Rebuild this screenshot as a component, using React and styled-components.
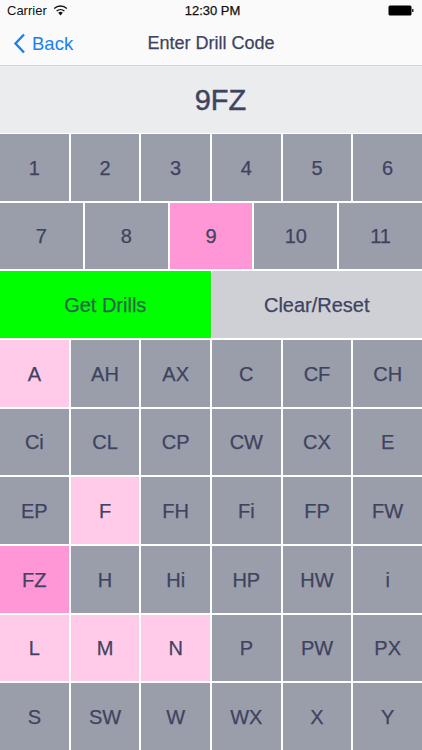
import React from 'react';
import styled, { createGlobalStyle } from 'styled-components';

const Global = createGlobalStyle`
  html, body { margin: 0; padding: 0; background: #fff; overflow: hidden; }
  body { font-family: "Liberation Sans", Arial, sans-serif; }
`;
const Screen = styled.div`
  width: 422px; height: 750px; overflow: hidden; background: #fff; color: #3f4360;
`;
const StatusBar = styled.div`
  height: 20px; background: #fafafa; padding: 0 7px; box-sizing: border-box;
  display: grid; grid-template-columns: 1fr auto 1fr; align-items: center;
  font-size: 13px; color: #111;
`;
const StatusLeft = styled.div`display: flex; align-items: center; gap: 6px;`;
const StatusRight = styled.div`display: flex; justify-content: flex-end; align-items: center; padding-right: 1px;`;
const Clock = styled.div`-webkit-text-stroke: 0.25px #111; padding-left: 3px;`;
const NavBar = styled.div`
  height: 45px; background: #fafafa; border-bottom: 1px solid #d4d5d8; box-sizing: content-box;
  display: grid; grid-template-columns: 1fr auto 1fr; align-items: center; padding-top: 0;
`;
const BackLink = styled.div`
  display: flex; align-items: center; gap: 6px; color: #1a80ef; font-size: 18.5px; padding: 2px 0 0 13px;
`;
const Title = styled.div`font-size: 18px; -webkit-text-stroke: 0.25px #3f4360; padding-top: 2px;`;
const Display = styled.div`
  height: 66.5px; background: #ebecee; display: flex; align-items: center; justify-content: center;
  padding: 2px 0 0 19px; box-sizing: border-box;
  font-size: 29px; -webkit-text-stroke: 0.45px #3f4360;
`;
const Pad = styled.div`
  display: flex; flex-direction: column; gap: 2px; padding-top: 1.5px;
`;
const Row = styled.div`
  display: grid; grid-template-columns: repeat(${p => p.$cols}, 1fr); gap: 2px; height: 66.67px; flex: none;
`;
const ActionRow = styled(Row)`gap: 1px;`;
const tones = { base: '#9a9eab', on: '#ff96d6', soft: '#ffcbe9', go: '#00ff00', clear: '#cfd0d5' };
const Key = styled.div`
  background: ${p => tones[p.$tone || 'base']};
  display: flex; align-items: center; justify-content: center;
  padding-top: 2px; box-sizing: border-box;
  font-size: 20px;
  color: ${p => (p.$tone === 'go' ? '#26684a' : '#3f4360')};
  -webkit-text-stroke: 0.25px currentColor;
`;

const rows = [
  ['A','AH','AX','C','CF','CH'],
  ['Ci','CL','CP','CW','CX','E'],
  ['EP','F','FH','Fi','FP','FW'],
  ['FZ','H','Hi','HP','HW','i'],
  ['L','M','N','P','PW','PX'],
  ['S','SW','W','WX','X','Y'],
];
const toneOf = { A: 'soft', F: 'soft', L: 'soft', M: 'soft', N: 'soft', FZ: 'on' };

export default function App() {
  return (
    <Screen>
      <Global />
      <StatusBar>
        <StatusLeft>
          <span>Carrier</span>
          <svg width="15" height="11" viewBox="0 0 15 11">
            <path d="M7.5 10.5 L5.2 7.8 A3.4 3.4 0 0 1 9.8 7.8 Z" fill="#111" />
            <path d="M3.6 6.1 A5.8 5.8 0 0 1 11.4 6.1" fill="none" stroke="#111" strokeWidth="1.4" />
            <path d="M1.2 3.5 A9.2 9.2 0 0 1 13.8 3.5" fill="none" stroke="#111" strokeWidth="1.4" />
          </svg>
        </StatusLeft>
        <Clock>12:30 PM</Clock>
        <StatusRight>
          <svg width="26" height="11" viewBox="0 0 26 11">
            <rect x="0.5" y="0.5" width="23" height="10" rx="1.5" fill="#000" />
            <rect x="24" y="4" width="1.5" height="3" fill="#333" />
          </svg>
        </StatusRight>
      </StatusBar>
      <NavBar>
        <BackLink>
          <svg width="13" height="21" viewBox="0 0 13 21">
            <path d="M11 1.5 L2.5 10.5 L11 19.5" fill="none" stroke="#1a80ef" strokeWidth="2.4" />
          </svg>
          <span>Back</span>
        </BackLink>
        <Title>Enter Drill Code</Title>
        <span />
      </NavBar>
      <Display>9FZ</Display>
      <Pad>
        <Row $cols={6}>
          {['1','2','3','4','5','6'].map(k => <Key key={k}>{k}</Key>)}
        </Row>
        <Row $cols={5}>
          {['7','8','9','10','11'].map(k => <Key key={k} $tone={k === '9' ? 'on' : 'base'}>{k}</Key>)}
        </Row>
        <ActionRow $cols={2}>
          <Key $tone="go">Get Drills</Key>
          <Key $tone="clear">Clear/Reset</Key>
        </ActionRow>
        {rows.map(r => (
          <Row $cols={6} key={r[0]}>
            {r.map(k => <Key key={k} $tone={toneOf[k]}>{k}</Key>)}
          </Row>
        ))}
      </Pad>
    </Screen>
  );
}
